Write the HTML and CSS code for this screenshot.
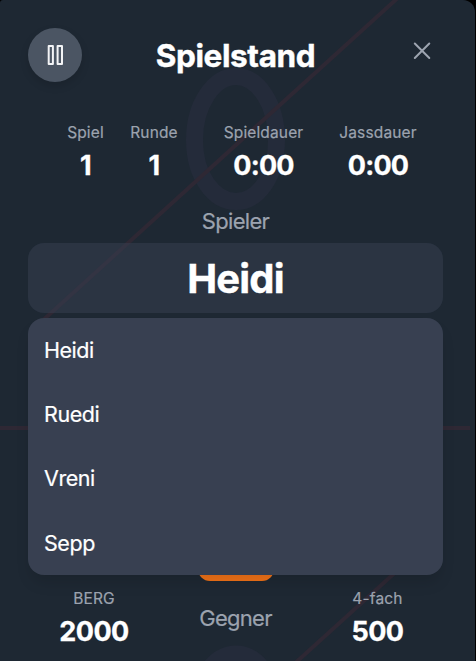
FILE: index.html
```html
<!DOCTYPE html>
<html lang="de">
<head>
<meta charset="utf-8">
<title>Spielstand</title>
<link rel="stylesheet" href="styles.css">
</head>
<body>
<main class="panel">
  <svg class="board" viewBox="0 0 475 661" aria-hidden="true">
    <g class="zero">
      <path d="M236 76.500C258 76.500 276.500 104 276.500 140C276.500 176 258 201.500 236 201.500C214 201.500 194.500 176 194.500 140C194.500 104 214 76.500 236 76.500Z"/>
      <path class="filled" d="M236 654C258 654 276.500 681 276.500 717C276.500 753 258 778 236 778C214 778 194.500 753 194.500 717C194.500 681 214 654 236 654Z"/>
    </g>
    <path class="stroke" d="M401-5L40 323M0 428H470M399 569L292 666"/>
  </svg>
  <header class="head">
    <button class="pause" aria-label="Pause">
      <svg viewBox="0 0 18 22"><path d="M2.700 2h4.200v18h-4.200zM11.600 2h4.400v18h-4.400z"/></svg>
    </button>
    <h1 class="title">Spielstand</h1>
    <button class="close" aria-label="Close">
      <svg viewBox="0 0 18 18"><path d="M1.800 1.500l14.500 14.500M16.300 1.500l-14.500 14.500"/></svg>
    </button>
  </header>
  <section class="stats">
    <div class="stat"><span class="label">Spiel</span><strong class="value">1</strong></div>
    <div class="stat"><span class="label">Runde</span><strong class="value">1</strong></div>
    <div class="stat"><span class="label">Spieldauer</span><strong class="value time">0:00</strong></div>
    <div class="stat"><span class="label">Jassdauer</span><strong class="value time">0:00</strong></div>
  </section>
  <h2 class="caption">Spieler</h2>
  <div class="selected">Heidi</div>
  <ul class="menu">
    <li>Heidi</li>
    <li>Ruedi</li>
    <li>Vreni</li>
    <li>Sepp</li>
  </ul>
  <footer class="foot">
    <div class="stat"><span class="label">BERG</span><strong class="value">2000</strong></div>
    <div class="middle"><span class="tab"></span><h2 class="opponent">Gegner</h2></div>
    <div class="stat"><span class="label">4-fach</span><strong class="value">500</strong></div>
  </footer>
</main>
</body>
</html>
```
FILE: styles.css
```css
* { box-sizing: border-box; margin: 0; padding: 0; }
body {
  width: 476px;
  height: 661px;
  overflow: hidden;
  background: #000;
  color: #fff;
  font-family: Inter, "Liberation Sans", sans-serif;
}
.panel {
  position: relative;
  isolation: isolate;
  width: 475px;
  height: 661px;
  padding: 28px 32px 0 28px;
  overflow: hidden;
  background: #1e2833;
  border-radius: 3px 12px 0 0;
}
.board { position: absolute; z-index: -1; top: 0; left: 0; width: 475px; height: 661px; fill: none; }
.zero { stroke: #242b3a; stroke-width: 17; }
.filled { fill: #242b3a; }
.stroke { stroke: #2e2834; stroke-width: 4; }
button { border: 0; background: none; color: inherit; }
.head { display: grid; grid-template-columns: 54px 1fr 54px; height: 54px; }
.pause {
  display: grid;
  place-items: center;
  width: 54px;
  height: 54px;
  border-radius: 50%;
  background: #4b5563;
  box-shadow: 0 4px 8px #0002;
}
.pause svg { width: 18px; height: 22px; fill: none; stroke: #f3f4f6; stroke-width: 2; stroke-linejoin: round; }
.title { text-align: center; font-size: 31.500px; line-height: 56px; font-weight: 700; letter-spacing: -.4px; -webkit-text-stroke: .4px #fff; }
.close { align-self: start; justify-self: end; display: block; margin: 14px 12.500px 0 0; }
.close svg { display: block; width: 18px; height: 18px; fill: none; stroke: #9ca3af; stroke-width: 2; stroke-linecap: round; }
.stats { display: grid; grid-template-columns: 69px 68px 151px 78px; margin: 40px 0 0 23px; height: 62px; }
.stat { display: flex; flex-direction: column; align-items: center; }
.label { font-size: 15.500px; line-height: 21px; color: #9ca3af; letter-spacing: .15px; -webkit-text-stroke: .2px #9ca3af; }
.value { font-size: 27px; line-height: 32px; margin-top: 7px; font-weight: 700; letter-spacing: -.5px; -webkit-text-stroke: .3px #fff; }
.time { letter-spacing: -.8px; }
.caption, .opponent { text-align: center; font-size: 22px; line-height: 30px; font-weight: 400; letter-spacing: -.7px; color: #9ca3af; -webkit-text-stroke: .2px #9ca3af; }
.caption { margin-top: 22px; }
.selected {
  height: 70px;
  margin-top: 7px;
  border-radius: 16px;
  background: #38405280;
  text-align: center;
  font-size: 40px;
  line-height: 71px;
  font-weight: 700;
  letter-spacing: -.8px;
  -webkit-text-stroke: .4px #fff;
}
.menu {
  position: relative;
  z-index: 1;
  height: 257px;
  margin-top: 5px;
  border-radius: 16px;
  background: #384051;
  box-shadow: 0 10px 15px -3px #0002;
  list-style: none;
}
.menu li { height: 64.200px; padding-left: 16px; font-size: 21.500px; line-height: 65px; letter-spacing: -.45px; -webkit-text-stroke: .2px #fff; }
.foot { display: grid; grid-template-columns: 132px 1fr 132px; }
.foot .stat { padding-top: 13px; }
.foot .stat:last-child { padding-left: 1px; }
.middle { display: flex; flex-direction: column; align-items: center; }
.tab { width: 76px; height: 36px; margin-top: -30px; border-radius: 12px; background: #f37318; }
.opponent { margin-top: 22px; }
```
